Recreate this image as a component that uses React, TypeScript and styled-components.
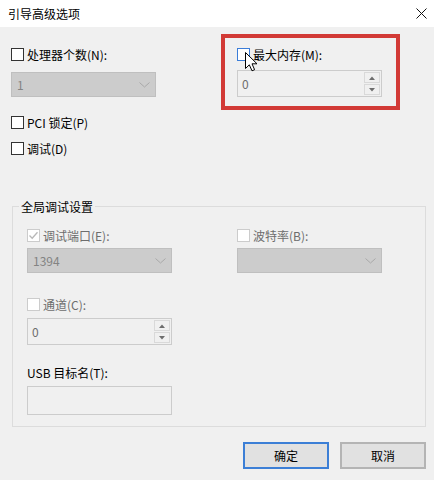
import styled, { createGlobalStyle } from "styled-components"

const GlobalStyle = createGlobalStyle`
  html, body {
    margin: 0;
    padding: 0;
    background: #f0f0f0;
  }
  body {
    font-family: "Noto Sans CJK SC", "Liberation Sans", sans-serif;
    font-size: 12px;
    color: #000;
  }
`

const Window = styled.div`
  width: 434px;
  height: 480px;
  overflow: hidden;
  background: #f0f0f0;
  display: flex;
  flex-direction: column;
`
const TitleBar = styled.div`
  height: 27px;
  background: #fff;
  display: flex;
  align-items: center;
  justify-content: space-between;
  padding: 0 7px 0 8px;
  box-sizing: border-box;
  flex-shrink: 0;
`
const Title = styled.span`
  font-size: 12px;
  line-height: 16px;
`
const TopGrid = styled.div`
  display: grid;
  grid-template-columns: 210px 179px;
  align-items: start;
  padding: 7px 0 0 11px;
`
const Column = styled.div<{ $top?: number }>`
  display: flex;
  flex-direction: column;
  padding-top: ${(p) => p.$top ?? 0}px;
`
const CheckRow = styled.label<{ $disabled?: boolean; $mt?: number }>`
  position: relative;
  display: flex;
  align-items: center;
  gap: 3px;
  height: 17px;
  line-height: 17px;
  margin-top: ${(p) => p.$mt ?? 0}px;
  color: ${(p) => (p.$disabled ? "#6d6d6d" : "#000")};
  white-space: nowrap;
`
const Box = styled.span<{ $state?: "normal" | "hover" | "disabled" }>`
  width: 13px;
  height: 13px;
  box-sizing: border-box;
  background: #fff;
  border: 1px solid
    ${(p) =>
      p.$state === "hover" ? "#3b7dd8" : p.$state === "disabled" ? "#cccccc" : "#333333"};
  display: flex;
  align-items: center;
  justify-content: center;
  flex-shrink: 0;
`
const Select = styled.div<{ $mt?: number }>`
  width: 145px;
  height: 25px;
  box-sizing: border-box;
  margin-top: ${(p) => p.$mt ?? 0}px;
  background: #cccccc;
  border: 1px solid #bfbfbf;
  display: flex;
  align-items: center;
  justify-content: space-between;
  padding: 0 5px 0 5px;
  color: #838383;
  font-size: 12px;
`
const Highlight = styled.div`
  position: relative;
  border: 4px solid #d23a36;
  padding: 8px 0 9px 12px;
  display: flex;
  flex-direction: column;
`
const Spin = styled.div<{ $mt?: number }>`
  width: 145px;
  height: 27px;
  box-sizing: border-box;
  margin-top: ${(p) => p.$mt ?? 0}px;
  border: 1px solid #cccccc;
  display: flex;
  background: #f0f0f0;
`
const SpinField = styled.div`
  flex: 1;
  display: flex;
  align-items: center;
  padding-left: 4px;
  color: #6d6d6d;
`
const SpinButtons = styled.div`
  width: 17px;
  display: flex;
  flex-direction: column;
  gap: 1px;
  padding: 1px 1px 1px 0;
  box-sizing: border-box;
`
const SpinButton = styled.div`
  flex: 1;
  border: 1px solid #d9d9d9;
  background: #f0f0f0;
  display: flex;
  align-items: center;
  justify-content: center;
`
const Cursor = styled.svg`
  position: absolute;
  left: 8px;
  top: 6px;
`
const Group = styled.fieldset`
  margin: 41px 8px 0 12px;
  border: 1px solid #dcdcdc;
  padding: 0 0 11px 0;
  min-width: 0;
`
const Legend = styled.legend`
  margin-left: 6px;
  padding: 0 2px;
  line-height: 17px;
  font-size: 12px;
`
const GroupGrid = styled.div`
  display: grid;
  grid-template-columns: 210px 1fr;
  padding: 12px 0 0 14px;
`
const Label = styled.div<{ $mt?: number }>`
  height: 17px;
  line-height: 17px;
  margin-top: ${(p) => p.$mt ?? 0}px;
`
const TextBox = styled.div`
  width: 145px;
  height: 29px;
  box-sizing: border-box;
  margin-top: 5px;
  border: 1px solid #cccccc;
  background: #f0f0f0;
`
const Buttons = styled.div`
  display: flex;
  justify-content: flex-end;
  gap: 11px;
  padding: 15px 8px 0 0;
`
const Button = styled.button<{ $primary?: boolean }>`
  width: 86px;
  height: 27px;
  box-sizing: border-box;
  background: #e1e1e1;
  border: 2px solid ${(p) => (p.$primary ? "#3c7fd6" : "#b4b4b4")};
  font-family: inherit;
  font-size: 12px;
  color: #000;
  padding: 0;
`

const Chevron = () => (
  <svg width="11" height="6" viewBox="0 0 11 6">
    <path d="M0.5 0.5 L5.5 5 L10.5 0.5" fill="none" stroke="#a8a8a8" strokeWidth="1" />
  </svg>
)

const Arrow = ({ up }: { up?: boolean }) => (
  <svg width="6" height="4" viewBox="0 0 6 4">
    <path d={up ? "M0 4 L3 0.5 L6 4 Z" : "M0 0 L6 0 L3 3.5 Z"} fill="#6d6d6d" />
  </svg>
)

const SpinBox = ({ value, mt }: { value: string; mt?: number }) => (
  <Spin $mt={mt}>
    <SpinField>{value}</SpinField>
    <SpinButtons>
      <SpinButton>
        <Arrow up />
      </SpinButton>
      <SpinButton>
        <Arrow />
      </SpinButton>
    </SpinButtons>
  </Spin>
)

const Check = ({ mark }: { mark?: boolean }) =>
  mark ? (
    <svg width="11" height="11" viewBox="0 0 11 11">
      <path d="M1.5 5.5 L4.2 8.3 L9.5 2.2" fill="none" stroke="#b8b8b8" strokeWidth="1.3" />
    </svg>
  ) : null

export default function App() {
  return (
    <Window>
      <GlobalStyle />
      <TitleBar>
        <Title>引导高级选项</Title>
        <svg width="11" height="11" viewBox="0 0 11 11">
          <path d="M0.5 0.5 L10.5 10.5 M10.5 0.5 L0.5 10.5" stroke="#111" strokeWidth="1" />
        </svg>
      </TitleBar>

      <TopGrid>
        <Column $top={12}>
          <CheckRow>
            <Box />
            处理器个数(N):
          </CheckRow>
          <Select $mt={9}>
            1
            <Chevron />
          </Select>
          <CheckRow $mt={17}>
            <Box />
            PCI 锁定(P)
          </CheckRow>
          <CheckRow $mt={9}>
            <Box />
            调试(D)
          </CheckRow>
        </Column>

        <Highlight>
          <CheckRow>
            <Box $state="hover" />
            最大内存(M):
            <Cursor width="13" height="20" viewBox="0 0 13 20">
              <path
                d="M0.5 0.5 L0.5 16.5 L4.3 12.8 L7 18.8 L9.6 17.7 L7 11.8 L12 11.8 Z"
                fill="#fff"
                stroke="#000"
                strokeWidth="1"
                strokeLinejoin="round"
              />
            </Cursor>
          </CheckRow>
          <SpinBox value="0" mt={7} />
        </Highlight>
      </TopGrid>

      <Group>
        <Legend>全局调试设置</Legend>
        <GroupGrid>
          <Column>
            <CheckRow $disabled>
              <Box $state="disabled">
                <Check mark />
              </Box>
              调试端口(E):
            </CheckRow>
            <Select $mt={4}>
              1394
              <Chevron />
            </Select>
            <CheckRow $disabled $mt={23}>
              <Box $state="disabled" />
              通道(C):
            </CheckRow>
            <SpinBox value="0" mt={5} />
            <Label $mt={19}>USB 目标名(T):</Label>
            <TextBox />
          </Column>
          <Column>
            <CheckRow $disabled>
              <Box $state="disabled" />
              波特率(B):
            </CheckRow>
            <Select $mt={4}>
              <span />
              <Chevron />
            </Select>
          </Column>
        </GroupGrid>
      </Group>

      <Buttons>
        <Button $primary>确定</Button>
        <Button>取消</Button>
      </Buttons>
    </Window>
  )
}
